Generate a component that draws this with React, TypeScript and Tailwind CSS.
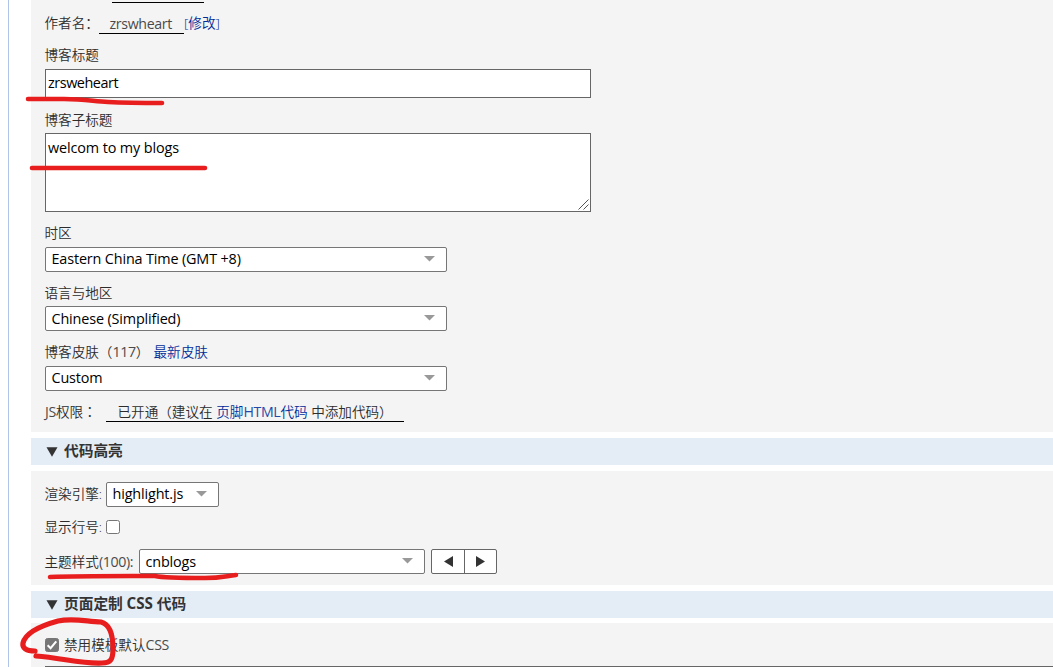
import React, { useState } from 'react';

const Label: React.FC<{ className?: string; children: React.ReactNode }> = ({ className = '', children }) => (
  <div className={`flex items-center whitespace-nowrap ${className}`}>{children}</div>
);

// Latin letters and digits inside the Chinese labels
const Latin: React.FC<{ children: React.ReactNode }> = ({ children }) => (
  <span className="text-[14.2px] font-normal tracking-[-0.35px] opacity-85">{children}</span>
);

interface SelectProps {
  value: string;
  className: string;
  low?: boolean;
}

const Select: React.FC<SelectProps> = ({ value, className, low = false }) => (
  <button
    type="button"
    className={`flex h-[25px] shrink-0 items-center justify-between rounded-[2px] border border-[#767676] bg-white pl-[5.5px] pr-[12px] text-[14.4px] tracking-[-0.15px] text-black ${className}`}
  >
    <span className={`whitespace-nowrap leading-[22px] ${low ? 'pt-px' : 'pb-px'}`}>{value}</span>
    <svg width="11" height="6" viewBox="0 0 11 6" className="-mr-px -mt-px">
      <path d="M0 0h11L5.5 5.5z" fill="#999" />
    </svg>
  </button>
);

const Checkbox: React.FC<{ checked: boolean; onChange: () => void; label: string }> = ({ checked, onChange, label }) => (
  <button
    type="button"
    role="checkbox"
    aria-checked={checked}
    aria-label={label}
    onClick={onChange}
    className={`-mt-px h-[14px] w-[14px] shrink-0 rounded-[2.5px] border border-[#767676] ${checked ? 'bg-[#767676]' : 'bg-white'}`}
  >
    {checked && (
      <svg width="12" height="12" viewBox="0 0 11 11" fill="none">
        <path d="M1.5 5.8 4.2 8.4 9.4 2.2" stroke="#fff" strokeWidth="1.9" />
      </svg>
    )}
  </button>
);

const SectionTitle: React.FC<{ children: React.ReactNode }> = ({ children }) => (
  <h2 className="flex h-[27px] items-center bg-[#e4ecf6] pb-[2px] pl-[15px] text-[14.7px] font-bold text-[#333]">
    <svg width="12" height="10" viewBox="0 0 12 10" className="mr-[6px] mt-[2px]">
      <path d="M.5.3h11L6 9.8z" fill="#333" />
    </svg>
    {children}
  </h2>
);

// Freehand red pen marks lying over the form
const PenMarks = () => (
  <svg
    className="pointer-events-none absolute left-0 top-0"
    width="1053"
    height="667"
    viewBox="0 0 1053 667"
    fill="none"
    stroke="#e81e1e"
    strokeWidth="4.6"
    strokeLinecap="round"
    strokeLinejoin="round"
  >
    <path d="M28 99H64C84 99 92 101 108 102C128 103 144 103 162 103" />
    <path d="M32 168H205" />
    <path d="M50 577C74 576 98 576 132 576H155C164 578 180 578 205 578C221 578 226 576 236 575" />
    <path d="M35 651C26 651 22 648 23 643C25 635 36 627 58 621C72 618 84 621 101 622C109 624 113 634 113 649C113 659 111 663 102 663C82 664 62 658 36 656" strokeWidth="5.2" />
  </svg>
);

export default function App() {
  const [lineNumbers, setLineNumbers] = useState(false);
  const [disableDefault, setDisableDefault] = useState(true);

  return (
    <div className="relative flex h-[667px] w-[1053px] overflow-hidden bg-white pl-[8px] font-['Open_Sans','Noto_Sans_CJK_SC',sans-serif] text-[13.6px] text-[#2c2c2c]">
      <div className="w-px shrink-0 bg-[#b0c4e8]" />
      <main className="ml-[22px] flex flex-1 flex-col">
        <section className="h-[432px] bg-[#f4f4f4] pl-[14px]">
          <div className="ml-[67px] h-[3px] w-[92px] border-b border-black" />
          <Label className="mt-[10px] h-[21px] font-[350]">
            <span className="-ml-[0.5px] w-[54.5px]">作者名：</span>
            <span className="h-[21px] w-[85px] border-b border-black pl-[10.5px] leading-[21px]">
              <Latin>zrswheart</Latin>
            </span>
            <a href="#" className="text-[#002c99]">[修改]</a>
          </Label>
          <Label className="-ml-[0.5px] mt-[10px] h-[22px] font-[350]">博客标题</Label>
          <input
            type="text"
            aria-label="博客标题"
            defaultValue="zrsweheart"
            className="mt-[3px] block h-[29px] w-[546px] border border-[#666] bg-white px-[2px] pb-[2px] text-[14.4px] tracking-[-0.45px] text-black outline-none"
          />
          <Label className="-ml-[0.5px] mt-[11px] h-[22px] font-[350]">博客子标题</Label>
          <div className="relative mt-[2px] h-[79px] w-[546px]">
            <textarea
              aria-label="博客子标题"
              defaultValue="welcom to my blogs"
              className="block h-[79px] w-[546px] resize-none border border-[#666] bg-white px-[2px] py-[3px] text-[14.4px] leading-[22px] tracking-[-0.12px] text-black outline-none"
            />
            <svg width="11" height="11" viewBox="0 0 11 11" className="absolute bottom-[2px] right-[2px]" stroke="#555" strokeWidth="1">
              <path d="M.5 10.5 10.5.5M5.5 10.5l5-5" />
            </svg>
          </div>
          <Label className="-ml-[0.5px] mt-[10px] h-[22px] font-[350]">时区</Label>
          <Select value="Eastern China Time (GMT +8)" className="mt-[3px] w-[402px]" />
          <Label className="-ml-[0.5px] mt-[10px] h-[22px] font-[350]">语言与地区</Label>
          <Select value="Chinese (Simplified)" className="mt-[2px] w-[402px]" low />
          <Label className="-ml-[0.5px] mt-[10px] h-[22px] font-[350]">
            <span className="w-[109px]">博客皮肤（<Latin>117</Latin>）</span>
            <a href="#" className="text-[#002c99]">最新皮肤</a>
          </Label>
          <Select value="Custom" className="mt-[3px] w-[402px]" />
          <Label className="mt-[10px] h-[21px] font-[350]">
            <span className="w-[61px]">
              <Latin>JS</Latin>权限<span className="font-['Noto_Sans_CJK_TC',sans-serif]" lang="zh-TW">：</span>
            </span>
            <span className="h-[21px] w-[298px] border-b border-black pl-[11.5px] leading-[21px]">
              已开通（建议在 <a href="#" className="text-[#002c99]">页脚<Latin>HTML</Latin>代码</a> 中添加代码）
            </span>
          </Label>
        </section>

        <div className="mt-[6px]">
          <SectionTitle>代码高亮</SectionTitle>
        </div>
        <section className="mt-[6px] h-[114px] bg-[#f4f4f4] pl-[14px] pt-[11px] font-[350]">
          <div className="flex h-[25px] items-center">
            <span className="-ml-[0.5px] w-[61.5px] whitespace-nowrap">渲染引擎:</span>
            <Select value="highlight.js" className="w-[113px] font-normal" />
          </div>
          <div className="mt-[9px] flex h-[22px] items-center">
            <span className="-ml-[0.5px] w-[61.5px] whitespace-nowrap">显示行号:</span>
            <Checkbox checked={lineNumbers} onChange={() => setLineNumbers(!lineNumbers)} label="显示行号" />
          </div>
          <div className="mt-[11px] flex h-[25px] items-center">
            <span className="-ml-[0.5px] w-[94.5px] whitespace-nowrap">主题样式<Latin>(100):</Latin></span>
            <Select value="cnblogs" className="w-[286px] font-normal" low />
            <div className="ml-[6px] flex h-[25px] w-[66px] rounded-[2px] border border-[#666] bg-white">
              <button type="button" aria-label="上一个" className="flex w-[33px] items-center justify-center border-r border-[#666] pb-px">
                <svg width="9" height="11" viewBox="0 0 9 11"><path d="M9 0v11L0 5.5z" fill="#333" /></svg>
              </button>
              <button type="button" aria-label="下一个" className="flex flex-1 items-center justify-center pb-px">
                <svg width="9" height="11" viewBox="0 0 9 11"><path d="M0 0v11l9-5.5z" fill="#333" /></svg>
              </button>
            </div>
          </div>
        </section>

        <div className="mt-[6px]">
          <SectionTitle>
            <span className="whitespace-pre">页面定制 <span className="text-[15.2px]">CSS</span> 代码</span>
          </SectionTitle>
        </div>
        <section className="mt-[5px] h-[44px] bg-[#f4f4f4] pl-[14px] pt-[11px]">
          <div className="flex h-[22px] items-center font-[350]">
            <Checkbox checked={disableDefault} onChange={() => setDisableDefault(!disableDefault)} label="禁用模板默认CSS" />
            <span className="-mt-px ml-[5px]">禁用模板默认<Latin>CSS</Latin></span>
          </div>
          <div className="mt-[10px] h-px bg-[#666]" />
        </section>
      </main>
      <PenMarks />
    </div>
  );
}
